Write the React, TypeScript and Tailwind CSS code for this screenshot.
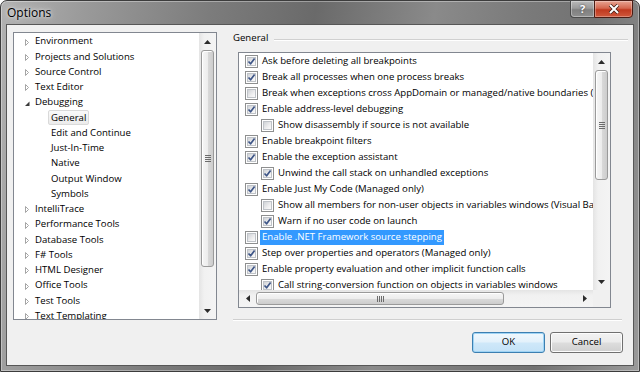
import React from 'react';

type TreeItem = { t: string; kind: 'c' | 'e' | 'child'; sel?: boolean };

const tree: TreeItem[] = [
  { t: 'Environment', kind: 'c' },
  { t: 'Projects and Solutions', kind: 'c' },
  { t: 'Source Control', kind: 'c' },
  { t: 'Text Editor', kind: 'c' },
  { t: 'Debugging', kind: 'e' },
  { t: 'General', kind: 'child', sel: true },
  { t: 'Edit and Continue', kind: 'child' },
  { t: 'Just-In-Time', kind: 'child' },
  { t: 'Native', kind: 'child' },
  { t: 'Output Window', kind: 'child' },
  { t: 'Symbols', kind: 'child' },
  { t: 'IntelliTrace', kind: 'c' },
  { t: 'Performance Tools', kind: 'c' },
  { t: 'Database Tools', kind: 'c' },
  { t: 'F# Tools', kind: 'c' },
  { t: 'HTML Designer', kind: 'c' },
  { t: 'Office Tools', kind: 'c' },
  { t: 'Test Tools', kind: 'c' },
  { t: 'Text Templating', kind: 'c' },
];

type Opt = { t: string; on: boolean; sub?: boolean; hi?: boolean };
const opts: Opt[] = [
  { t: 'Ask before deleting all breakpoints', on: true },
  { t: 'Break all processes when one process breaks', on: true },
  { t: 'Break when exceptions cross AppDomain or managed/native boundaries (Managed only)', on: false },
  { t: 'Enable address-level debugging', on: true },
  { t: 'Show disassembly if source is not available', on: false, sub: true },
  { t: 'Enable breakpoint filters', on: true },
  { t: 'Enable the exception assistant', on: true },
  { t: 'Unwind the call stack on unhandled exceptions', on: true, sub: true },
  { t: 'Enable Just My Code (Managed only)', on: true },
  { t: 'Show all members for non-user objects in variables windows (Visual Basic only)', on: false, sub: true },
  { t: 'Warn if no user code on launch', on: true, sub: true },
  { t: 'Enable .NET Framework source stepping', on: false, hi: true },
  { t: 'Step over properties and operators (Managed only)', on: true },
  { t: 'Enable property evaluation and other implicit function calls', on: true },
  { t: 'Call string-conversion function on objects in variables windows', on: true, sub: true },
];

function Arrow({ kind }: { kind: 'c' | 'e' }) {
  if (kind === 'e')
    return (
      <svg width="6" height="8" viewBox="0 0 6 8" className="shrink-0">
        <path d="M5.5 2.5 L5.5 7 L1 7 Z" fill="#3a3a3a" />
      </svg>
    );
  return (
    <svg width="6" height="8" viewBox="0 0 6 8" className="shrink-0">
      <path d="M1.5 1.5 L4.5 4.5 L1.5 7.5 Z" fill="#ffffff" stroke="#a5a5a5" strokeWidth="1" />
    </svg>
  );
}

function CheckBox({ on }: { on: boolean }) {
  return (
    <div className="relative w-[13px] h-[13px] shrink-0 border border-[#8e8f8f] bg-white p-[1px]">
      <div className="w-full h-full bg-[linear-gradient(135deg,#cfd2d6_0%,#eeeeef_60%,#fbfbfb_100%)] border border-[#bfc3c8]" />
      {on && (
        <svg width="11" height="11" viewBox="0 0 11 11" className="absolute left-0 top-0">
          <path d="M2.5 5.5 L4.6 7.8 L8.6 2.6" stroke="#3d5587" strokeWidth="1.7" fill="none" strokeLinejoin="round" />
        </svg>
      )}
    </div>
  );
}

function UpArrow() {
  return (
    <svg width="7" height="4" viewBox="0 0 7 4"><path d="M0 4 L3.5 0 L7 4 Z" fill="#2b2b2b" /></svg>
  );
}
function DownArrow() {
  return (
    <svg width="7" height="4" viewBox="0 0 7 4"><path d="M0 0 L3.5 4 L7 0 Z" fill="#2b2b2b" /></svg>
  );
}
function LeftArrow() {
  return (
    <svg width="4" height="7" viewBox="0 0 4 7"><path d="M4 0 L0 3.5 L4 7 Z" fill="#2b2b2b" /></svg>
  );
}
function RightArrow() {
  return (
    <svg width="4" height="7" viewBox="0 0 4 7"><path d="M0 0 L4 3.5 L0 7 Z" fill="#2b2b2b" /></svg>
  );
}

function VScroll({ thumbTop, thumbH }: { thumbTop: number; thumbH: number }) {
  return (
    <div className="w-[17px] h-full shrink-0 flex flex-col bg-[linear-gradient(90deg,#e4e4e4_0%,#f1f1f1_30%,#f4f4f4_100%)]">
      <div className="h-[17px] flex items-center justify-center shrink-0"><UpArrow /></div>
      <div className="flex-1 flex flex-col">
        <div style={{ height: thumbTop }} className="shrink-0" />
        <div
          style={{ height: thumbH }}
          className="mx-[2px] rounded-[3px] border border-[#9a9a9a] bg-[linear-gradient(90deg,#f6f6f6_0%,#ededed_50%,#d9d9d9_55%,#cdcdcd_100%)] shadow-[inset_1px_1px_0_#ffffff] flex flex-col items-center justify-center gap-[1px]"
        >
          <div className="w-[6px] h-px bg-[#6b6b6b]" />
          <div className="w-[6px] h-px bg-[#6b6b6b]" />
          <div className="w-[6px] h-px bg-[#6b6b6b]" />
          <div className="w-[6px] h-px bg-[#6b6b6b]" />
        </div>
      </div>
      <div className="h-[17px] flex items-center justify-center shrink-0"><DownArrow /></div>
    </div>
  );
}

function HScroll() {
  return (
    <div className="h-[17px] flex-1 flex bg-[linear-gradient(180deg,#e4e4e4_0%,#f1f1f1_30%,#f4f4f4_100%)]">
      <div className="w-[17px] flex items-center justify-center shrink-0"><LeftArrow /></div>
      <div className="flex-1 flex items-stretch py-[2px]">
        <div className="w-[248px] rounded-[3px] border border-[#9a9a9a] bg-[linear-gradient(180deg,#f6f6f6_0%,#ededed_50%,#d9d9d9_55%,#cdcdcd_100%)] shadow-[inset_1px_1px_0_#ffffff] flex items-center justify-center gap-[1px]">
          <div className="w-px h-[6px] bg-[#6b6b6b]" />
          <div className="w-px h-[6px] bg-[#6b6b6b]" />
          <div className="w-px h-[6px] bg-[#6b6b6b]" />
          <div className="w-px h-[6px] bg-[#6b6b6b]" />
        </div>
      </div>
      <div className="w-[17px] flex items-center justify-center shrink-0"><RightArrow /></div>
    </div>
  );
}

export default function App() {
  return (
    <div className="w-[640px] h-[372px] overflow-hidden bg-white font-['Segoe_UI','Open_Sans',sans-serif]">
      <div className="w-[640px] h-[372px] rounded-t-[7px] border border-[#3c3c3c] bg-[linear-gradient(100deg,#b2b2b2_0%,#9a9a9a_12%,#7c7c7c_30%,#6a6a6a_45%,#8a8a8a_62%,#7a7a7a_75%,#727272_85%,#9a9a9a_100%)] flex flex-col px-[5px] pb-[5px] shadow-[inset_0_0_0_1px_rgba(255,255,255,0.35)]">
        {/* title bar */}
        <div className="h-[23px] shrink-0 flex items-start justify-between">
          <div className="pl-[1px] pt-[4px] text-[12px] leading-[15px] text-black [text-shadow:0_0_6px_#e0e0e0,0_0_3px_#e8e8e8]">Options</div>
          <div className="flex mt-[-1px] mr-px">
            <div className="w-[24px] h-[18px] rounded-bl-[4px] border border-[#4a4a4a] border-r-0 bg-[linear-gradient(180deg,#b9b9b9_0%,#9b9b9b_45%,#808080_55%,#8f8f8f_100%)] shadow-[inset_0_0_0_1px_rgba(255,255,255,0.35)] flex items-center justify-center text-[11px] font-bold text-white [text-shadow:0_0_2px_#333]">?</div>
            <div className="w-[39px] h-[18px] rounded-br-[4px] border border-[#4a1c14] bg-[linear-gradient(180deg,#e8a493_0%,#d4674f_45%,#c0391f_55%,#d0583c_100%)] shadow-[inset_0_0_0_1px_rgba(255,255,255,0.3)] flex items-center justify-center">
              <svg width="12" height="10" viewBox="0 0 12 10">
                <path d="M2 1 L10 9 M10 1 L2 9" stroke="#3a1a12" strokeWidth="3.4" />
                <path d="M2 1 L10 9 M10 1 L2 9" stroke="#ffffff" strokeWidth="2" />
              </svg>
            </div>
          </div>
        </div>

        {/* client */}
        <div className="flex-1 border border-[#575757] bg-[#f0f0f0] flex pl-[6px] pt-[7px] text-[9.6px] text-black">
          {/* tree */}
          <div className="w-[204px] h-[288px] shrink-0 border border-[#828790] bg-white flex overflow-hidden">
            <div className="flex-1 pt-[1px] overflow-hidden">
              {tree.map((it) =>
                it.kind === 'child' ? (
                  <div key={it.t} className="h-[15.25px] flex items-center pl-[34px] whitespace-nowrap">
                    <div
                      className={
                        it.sel
                          ? 'h-[15px] flex items-center pl-[2px] pr-[2px] border border-[#d9d9d9] rounded-[2px] bg-[linear-gradient(180deg,#fafafa_0%,#ebebeb_100%)]'
                          : 'h-[15px] flex items-center pl-[2px] pr-[2px] border border-transparent'
                      }
                    >
                      {it.t}
                    </div>
                  </div>
                ) : (
                  <div key={it.t} className="h-[15.25px] flex items-center pl-[10px] whitespace-nowrap">
                    <Arrow kind={it.kind} />
                    <span className="ml-[5px]">{it.t}</span>
                  </div>
                )
              )}
            </div>
            <VScroll thumbTop={0} thumbH={217} />
          </div>

          {/* right column */}
          <div className="ml-[16px] w-[395px] flex flex-col">
            <div className="h-[13px] flex items-center">
              <span>General</span>
              <div className="flex-1 ml-[6px] mt-[2px] h-px bg-[#d0d0d0] border-b border-white box-content" />
            </div>
            <div className="ml-[5px] mt-[7px] w-[373px] h-[256px] border border-[#828790] bg-white flex flex-col overflow-hidden">
              <div className="flex-1 flex overflow-hidden">
                <div className="flex-1 pt-[0.5px] overflow-hidden">
                  {opts.map((o) => (
                    <div key={o.t} className={(o.sub ? 'pl-[22px] ' : 'pl-[6px] ') + 'h-[16px] flex items-center whitespace-nowrap'}>
                      <CheckBox on={o.on} />
                      <div
                        className={
                          o.hi
                            ? 'ml-[2px] px-[2px] h-[15px] flex items-center bg-[#3399ff] text-white'
                            : 'ml-[2px] px-[2px] h-[15px] flex items-center'
                        }
                      >
                        {o.t}
                      </div>
                    </div>
                  ))}
                </div>
                <VScroll thumbTop={-1} thumbH={110} />
              </div>
              <div className="h-[17px] shrink-0 flex">
                <HScroll />
                <div className="w-[17px] h-[17px] bg-[#f0f0f0]" />
              </div>
            </div>
            <div className="mt-[11px] w-[389px] h-px bg-[#cfcfcf] border-b border-white box-content" />
            <div className="mt-[11px] flex justify-end pr-[5px] gap-[5px]">
              <div className="w-[73px] h-[21px] rounded-[3px] border border-[#3c7fb1] bg-[linear-gradient(180deg,#f0f8fd_0%,#e3f1fb_48%,#cfe8f9_52%,#c4e2f7_100%)] shadow-[inset_0_0_0_1px_#9fd4f5] flex items-center justify-center">OK</div>
              <div className="w-[73px] h-[21px] rounded-[3px] border border-[#707070] bg-[linear-gradient(180deg,#f2f2f2_0%,#ebebeb_48%,#dddddd_52%,#cfcfcf_100%)] shadow-[inset_0_0_0_1px_#fcfcfc] flex items-center justify-center">Cancel</div>
            </div>
          </div>
        </div>
      </div>
    </div>
  );
}
